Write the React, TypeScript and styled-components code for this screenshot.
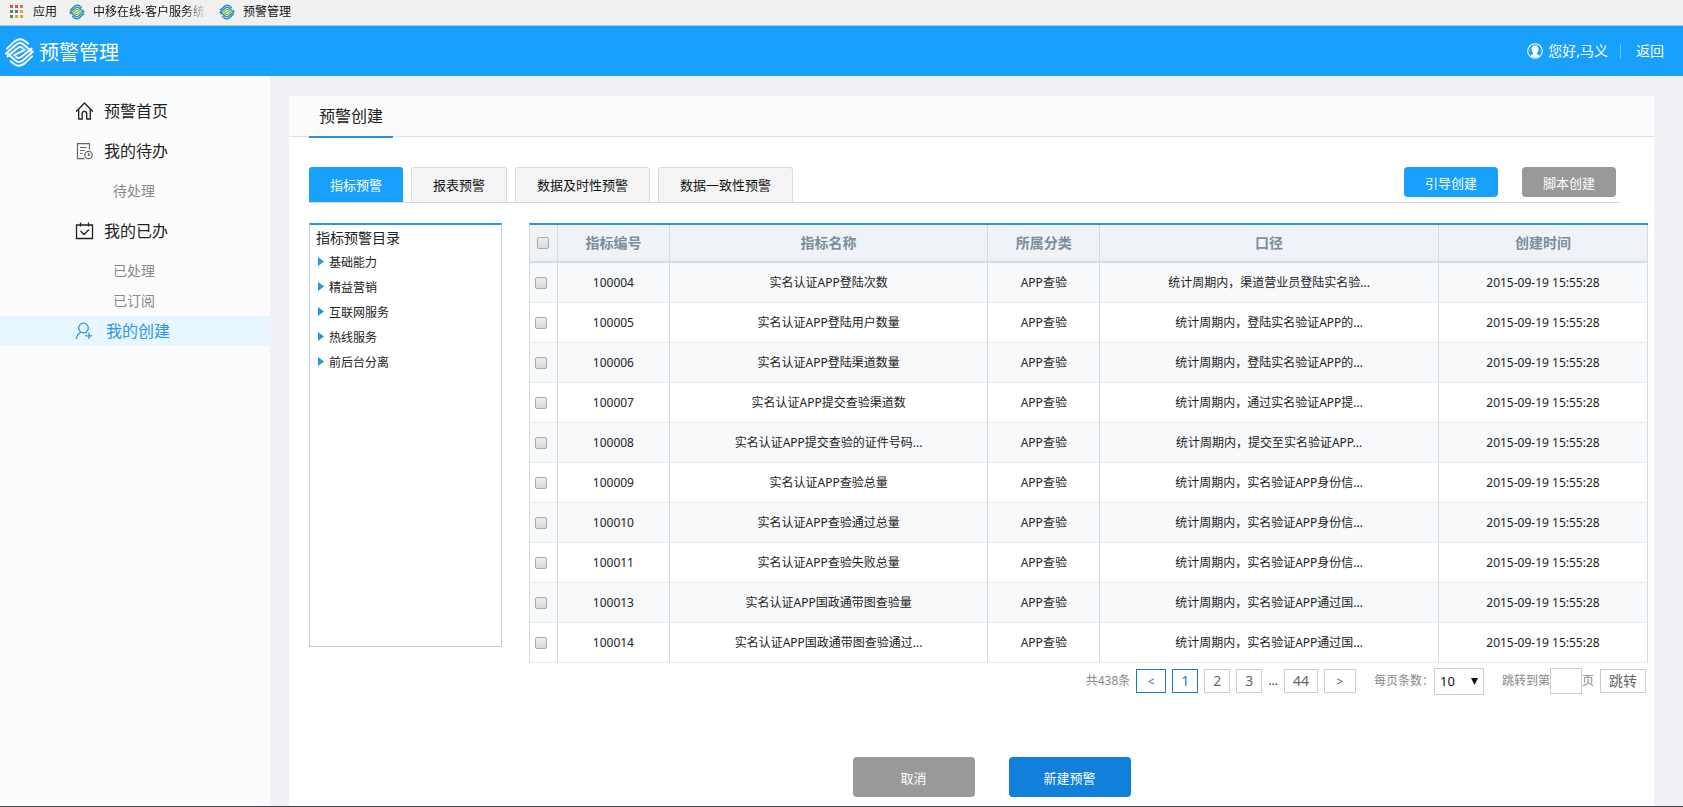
import React from "react";
import styled, { createGlobalStyle, css } from "styled-components";

const Global = createGlobalStyle`
  *, *::before, *::after { box-sizing: border-box; }
  body {
    margin: 0;
    background: #f0f0f5;
    color: #222;
    font: 12px/20px "Noto Sans", "Noto Sans CJK SC", sans-serif;
  }
  button, input, select { font-family: inherit; margin: 0; }
  a { color: inherit; text-decoration: none; }
  h1, h2, p, ul { margin: 0; padding: 0; font-weight: 400; }
  ul { list-style: none; }
`;

const Page = styled.div`
  min-height: 100vh;
  display: flex;
  flex-direction: column;
  border-bottom: 1px solid #3f4450;
`;

const BookmarkBar = styled.nav`
  height: 26px;
  padding: 0 9px 2px;
  display: flex;
  align-items: center;
  gap: 12px;
  background: #f1f1f1;
  border-bottom: 1px solid #b9c4cf;
`;

const Bookmark = styled.a<{ $faded?: boolean }>`
  display: flex;
  align-items: center;
  gap: 8px;
  color: #111;
  white-space: nowrap;
  ${(p) =>
    p.$faded &&
    css`
      span {
        width: 114px;
        overflow: hidden;
        mask-image: linear-gradient(90deg, #000 80%, transparent);
      }
    `}
`;

const TopBar = styled.header`
  height: 50px;
  padding: 0 19px 0 4px;
  display: flex;
  align-items: center;
  justify-content: space-between;
  background: #18a1fc;
  color: #fff;
`;

const Brand = styled.div`
  display: flex;
  align-items: center;
  gap: 4px;
  padding-top: 3px;
`;

const BrandName = styled.h1`
  font-size: 20px;
  line-height: 28px;
`;

const UserArea = styled.div`
  display: flex;
  align-items: center;
  font-size: 14px;
`;

const UserName = styled.span`
  margin-left: 5px;
`;

const Divider = styled.span`
  width: 1px;
  height: 15px;
  margin: 0 15px 0 12px;
  background: #6cc3fd;
`;

const Body = styled.div`
  flex: 1;
  display: flex;
`;

const Sidebar = styled.nav`
  flex: 0 0 270px;
  padding-top: 16px;
  background: #fcfcfc;
`;

const MenuLink = styled.a<{ $active?: boolean }>`
  height: ${(p) => (p.$active ? 30 : 40)}px;
  padding: ${(p) => (p.$active ? "0 0 0 75px" : "0 0 2px 75px")};
  display: flex;
  align-items: center;
  gap: ${(p) => (p.$active ? 12 : 10)}px;
  font-size: 16px;
  color: ${(p) => (p.$active ? "#2f95e8" : "#222")};
  background: ${(p) => (p.$active ? "#e8f6ff" : "transparent")};
`;

const SubMenu = styled.ul<{ $last?: boolean }>`
  padding: ${(p) => (p.$last ? "4px 0 0" : "4px 0 6px")};
`;

const SubLink = styled.a`
  display: block;
  padding-left: 113px;
  font-size: 14px;
  line-height: 30px;
  color: #888;
`;

const Main = styled.main`
  flex: 1;
  min-width: 0;
  padding: 20px 29px 0 19px;
  display: flex;
`;

const Panel = styled.section`
  flex: 1;
  min-width: 0;
  background: #fff;
`;

const PanelHead = styled.div`
  height: 41px;
  padding-left: 20px;
  display: flex;
  background: #fcfcfc;
  border-bottom: 1px solid #dcdfe4;
`;

const PanelTitle = styled.h2`
  height: 42px;
  padding: 0 10px;
  border-bottom: 2px solid #2296e0;
  font-size: 16px;
  line-height: 40px;
`;

const TabRow = styled.div`
  margin: 30px 34px 0 20px;
  display: flex;
  justify-content: space-between;
  border-bottom: 1px solid #d6d6d6;
`;

const Tabs = styled.div`
  display: flex;
  gap: 8px;
`;

const Tab = styled.button<{ $active?: boolean }>`
  height: 35px;
  padding: 0 ${(p) => (p.$active ? 20 : 21)}px;
  border: 1px solid ${(p) => (p.$active ? "#18a1fc" : "#d8dadd")};
  border-bottom: 0;
  border-radius: 3px 3px 0 0;
  background: ${(p) => (p.$active ? "#18a1fc" : "#f4f4f4")};
  color: ${(p) => (p.$active ? "#fff" : "#111")};
  font-size: 13px;
  line-height: 20px;
`;

const CreateButtons = styled.div`
  display: flex;
  gap: 24px;
  padding-right: 4px;
`;

const tones = { blue: "#18a1fc", gray: "#999", deep: "#1080da" };

const Button = styled.button<{ $tone: keyof typeof tones; $large?: boolean }>`
  width: ${(p) => (p.$large ? 122 : 94)}px;
  height: ${(p) => (p.$large ? 40 : 30)}px;
  padding: 0;
  border: 0;
  border-radius: 4px;
  background: ${(p) => tones[p.$tone]};
  color: #fff;
  font-size: 13px;
`;

const Content = styled.div`
  margin: 20px 6px 0 20px;
  display: flex;
  align-items: flex-start;
  gap: 27px;
`;

const Tree = styled.aside`
  flex: 0 0 193px;
  height: 424px;
  padding: 2px 6px;
  border: 1px solid #c3cbd2;
  border-top: 2px solid #2e96d8;
`;

const TreeTitle = styled.p`
  font-size: 14px;
  line-height: 22px;
`;

const TreeItem = styled.button`
  height: 25px;
  padding: 0 2px;
  display: flex;
  align-items: center;
  gap: 5px;
  border: 0;
  background: none;
  color: #222;
  font-size: 12px;
`;

const TableArea = styled.div`
  flex: 1;
  min-width: 0;
`;

const Table = styled.table`
  width: 100%;
  table-layout: fixed;
  border-collapse: separate;
  border-spacing: 0;
  border-top: 2px solid #2e96d8;
  border-left: 1px solid #d3dbe2;
  text-align: center;
`;

const Th = styled.th<{ $width?: string }>`
  width: ${(p) => p.$width};
  height: 38px;
  padding: 0;
  border-right: 1px solid #d3dbe2;
  border-bottom: 2px solid #d8dde2;
  background: #eff2f6;
  color: #7b8d9b;
  font-size: 14px;
  font-weight: 700;
`;

const Row = styled.tr`
  &:nth-child(odd) {
    background: #f7f9fb;
  }
`;

const Td = styled.td`
  height: 40px;
  padding: 0;
  border-right: 1px solid #d3dbe2;
  border-bottom: 1px solid #e9ecef;
  white-space: nowrap;
  overflow: hidden;
`;

const Check = styled.input`
  appearance: none;
  display: block;
  width: 12px;
  height: 12px;
  margin: 0 0 0 7px;
  border: 1px solid #aaa;
  border-radius: 2px;
  background: linear-gradient(#eee, #d9d9d9);
  &:checked {
    background: #18a1fc;
  }
  ${Td} & {
    margin-left: 5px;
  }
`;

const Pager = styled.div`
  height: 40px;
  padding: 0 2px 4px 0;
  display: flex;
  align-items: center;
  justify-content: flex-end;
  gap: 6px;
  color: #888;
  white-space: nowrap;
`;

const PageButton = styled.button<{ $active?: boolean; $width?: number }>`
  width: ${(p) => p.$width ?? 26}px;
  height: 24px;
  padding: 0;
  border: 1px solid ${(p) => (p.$active ? "#1a7fb8" : "#ccc")};
  background: #fff;
  color: ${(p) => (p.$active ? "#1a7fb8" : "#666")};
  font-size: 14px;
  line-height: 20px;
`;

const Arrow = styled.span`
  font-size: 12px;
`;

const Dots = styled.span`
  color: #333;
`;

const PagerLabel = styled.label`
  display: flex;
  align-items: center;
  margin-left: 12px;
`;

const SelectBox = styled.span`
  position: relative;
  display: flex;
  color: #111;
  svg {
    position: absolute;
    top: 10px;
    right: 6px;
    pointer-events: none;
  }
`;

const PageSize = styled.select`
  appearance: none;
  width: 50px;
  height: 27px;
  padding: 0 0 0 5px;
  border: 1px solid #ccc;
  border-radius: 0;
  background: #fff;
  color: #111;
  font-size: 13px;
`;

const PageInput = styled.input`
  width: 32px;
  height: 26px;
  border: 1px solid #ccc;
  text-align: center;
`;

const Actions = styled.div`
  padding: 54px 0 9px 40px;
  display: flex;
  justify-content: center;
  gap: 34px;
`;

function MobileLogo({ size, color }: { size: number; color?: boolean }) {
  const outer = color ? "#1d86c8" : "#fff";
  const inner = color ? "#7dbb3c" : "#fff";
  const half = (
    <>
      <path stroke={outer} d="M3 12 11 4.500Q17 0 22 4.500L25 7" />
      <path stroke={outer} d="M2 17 13 7.500Q17 4.500 20.500 8L28.500 15" />
      <path stroke={inner} d="M3.500 20 14 11.500Q17 9 19.500 11.500" />
    </>
  );
  return (
    <svg width={size} height={size} viewBox="0 0 32 32" fill="none" strokeWidth={color ? 2.6 : 2} strokeLinecap="round" strokeLinejoin="round" aria-hidden="true">
      {half}
      <g transform="rotate(180 16 16)">{half}</g>
      <path stroke={inner} d="M10.500 19 21.500 13" />
    </svg>
  );
}

function AppsIcon() {
  const colors = ["#d9534a", "#d9534a", "#d9743a", "#5b8a4c", "#4a78c8", "#d9a43a", "#5b8a4c", "#d9a43a", "#d9a43a"];
  return (
    <svg width="16" height="14" viewBox="0 0 16 14" aria-hidden="true">
      {colors.map((c, i) => (
        <rect key={i} x={(i % 3) * 5 + 1} y={Math.floor(i / 3) * 5} width="3" height="3" fill={c} />
      ))}
    </svg>
  );
}

function UserIcon() {
  return (
    <svg width="16" height="16" viewBox="0 0 16 16" aria-hidden="true">
      <circle cx="8" cy="8" r="7.3" fill="none" stroke="#fff" strokeWidth="1.1" />
      <path fill="#fff" d="M8 2.500c2.500 0 3.600 1.700 3.600 3.700 0 1.600-.8 2.900-1.700 3.500v1.100c0 .7 1.900 1 2.600 1.700A6.500 6.500 0 0 1 8 14.600a6.500 6.500 0 0 1-4.500-2.100c.7-.7 2.600-1 2.600-1.700V9.700C5.200 9.100 4.400 7.800 4.400 6.200 4.400 4.200 5.500 2.500 8 2.500z" />
    </svg>
  );
}

const iconProps = { width: 19, height: 20, viewBox: "0 0 19 20", fill: "none", stroke: "currentColor", "aria-hidden": true } as const;

function HomeIcon() {
  return (
    <svg {...iconProps} strokeWidth="1.3" strokeLinejoin="round" strokeLinecap="round">
      <path d="M1.500 10.300 9.500 2l8 8.300M3.700 8.500V18h3.500v-5.300a2.200 2.200 0 0 1 4.500 0V18h3.600V8.500" />
    </svg>
  );
}

function TodoIcon() {
  return (
    <svg {...iconProps} stroke="#666" strokeWidth="1.2">
      <path d="M14.500 8.500V2.600H2.500v15h7M5 6.500h6.500M5 9.500h4.500M5 12.500h2.500" />
      <circle cx="13.500" cy="14" r="3.700" />
      <path d="M13.500 12v2.200h2" />
    </svg>
  );
}

function DoneIcon() {
  return (
    <svg {...iconProps} strokeWidth="1.3">
      <path d="M1.500 4h16v13.500h-16zM5.500 1.500v4M13.500 1.500v4M5.500 10l3.500 3.500 5-5" />
    </svg>
  );
}

function CreateIcon() {
  return (
    <svg {...iconProps} strokeWidth="1.3">
      <circle cx="8.500" cy="7" r="4.800" />
      <path d="M1.500 18c.3-3.500 1.800-5.700 4.500-6.800M10.800 11.300l1.200 1M14 11.500v6.500M10.500 14.800h6.500" />
    </svg>
  );
}

const categories = ["基础能力", "精益营销", "互联网服务", "热线服务", "前后台分离"];

const rows = [
  ["100004", "实名认证APP登陆次数", "统计周期内，渠道营业员登陆实名验..."],
  ["100005", "实名认证APP登陆用户数量", "统计周期内，登陆实名验证APP的..."],
  ["100006", "实名认证APP登陆渠道数量", "统计周期内，登陆实名验证APP的..."],
  ["100007", "实名认证APP提交查验渠道数", "统计周期内，通过实名验证APP提..."],
  ["100008", "实名认证APP提交查验的证件号码...", "统计周期内，提交至实名验证APP..."],
  ["100009", "实名认证APP查验总量", "统计周期内，实名验证APP身份信..."],
  ["100010", "实名认证APP查验通过总量", "统计周期内，实名验证APP身份信..."],
  ["100011", "实名认证APP查验失败总量", "统计周期内，实名验证APP身份信..."],
  ["100013", "实名认证APP国政通带图查验量", "统计周期内，实名验证APP通过国..."],
  ["100014", "实名认证APP国政通带图查验通过...", "统计周期内，实名验证APP通过国..."],
];

export default function App() {
  return (
    <Page>
      <Global />
      <BookmarkBar aria-label="书签">
        <Bookmark href="#apps"><AppsIcon /><span>应用</span></Bookmark>
        <Bookmark href="#service" $faded><MobileLogo size={16} color /><span>中移在线-客户服务统</span></Bookmark>
        <Bookmark href="#warning"><MobileLogo size={16} color /><span>预警管理</span></Bookmark>
      </BookmarkBar>
      <TopBar>
        <Brand>
          <MobileLogo size={31} />
          <BrandName>预警管理</BrandName>
        </Brand>
        <UserArea>
          <UserIcon />
          <UserName>您好,马义</UserName>
          <Divider />
          <a href="#back">返回</a>
        </UserArea>
      </TopBar>
      <Body>
        <Sidebar>
          <MenuLink href="#home"><HomeIcon />预警首页</MenuLink>
          <MenuLink href="#todo"><TodoIcon />我的待办</MenuLink>
          <SubMenu>
            <li><SubLink href="#pending">待处理</SubLink></li>
          </SubMenu>
          <MenuLink href="#done"><DoneIcon />我的已办</MenuLink>
          <SubMenu $last>
            <li><SubLink href="#processed">已处理</SubLink></li>
            <li><SubLink href="#subscribed">已订阅</SubLink></li>
          </SubMenu>
          <MenuLink href="#create" $active><CreateIcon />我的创建</MenuLink>
        </Sidebar>
        <Main>
          <Panel>
            <PanelHead>
              <PanelTitle>预警创建</PanelTitle>
            </PanelHead>
            <TabRow>
              <Tabs>
                <Tab $active>指标预警</Tab>
                <Tab>报表预警</Tab>
                <Tab>数据及时性预警</Tab>
                <Tab>数据一致性预警</Tab>
              </Tabs>
              <CreateButtons>
                <Button $tone="blue">引导创建</Button>
                <Button $tone="gray">脚本创建</Button>
              </CreateButtons>
            </TabRow>
            <Content>
              <Tree>
                <TreeTitle>指标预警目录</TreeTitle>
                <ul>
                  {categories.map((name) => (
                    <li key={name}>
                      <TreeItem>
                        <svg width="6" height="9" viewBox="0 0 6 9" aria-hidden="true"><path fill="#2398e4" d="M0 0l6 4.500L0 9z" /></svg>
                        {name}
                      </TreeItem>
                    </li>
                  ))}
                </ul>
              </Tree>
              <TableArea>
                <Table>
                  <thead>
                    <tr>
                      <Th $width="28px"><Check type="checkbox" aria-label="全选" /></Th>
                      <Th $width="10%">指标编号</Th>
                      <Th>指标名称</Th>
                      <Th $width="10%">所属分类</Th>
                      <Th $width="30.3%">口径</Th>
                      <Th $width="18.7%">创建时间</Th>
                    </tr>
                  </thead>
                  <tbody>
                    {rows.map(([id, name, scope]) => (
                      <Row key={id}>
                        <Td><Check type="checkbox" aria-label={id} /></Td>
                        <Td>{id}</Td>
                        <Td>{name}</Td>
                        <Td>APP查验</Td>
                        <Td>{scope}</Td>
                        <Td>2015-09-19 15:55:28</Td>
                      </Row>
                    ))}
                  </tbody>
                </Table>
                <Pager>
                  <span>共438条</span>
                  <PageButton $active $width={30} aria-label="上一页"><Arrow>&lt;</Arrow></PageButton>
                  <PageButton $active>1</PageButton>
                  <PageButton>2</PageButton>
                  <PageButton>3</PageButton>
                  <Dots>...</Dots>
                  <PageButton $width={34}>44</PageButton>
                  <PageButton $width={32} aria-label="下一页"><Arrow>&gt;</Arrow></PageButton>
                  <PagerLabel>
                    每页条数：
                    <SelectBox>
                      <PageSize defaultValue="10">
                        <option>10</option>
                        <option>20</option>
                        <option>50</option>
                      </PageSize>
                      <svg width="7" height="7" viewBox="0 0 7 7" aria-hidden="true"><path fill="#111" d="M0 0h7L3.500 7z" /></svg>
                    </SelectBox>
                  </PagerLabel>
                  <PagerLabel>
                    跳转到第
                    <PageInput type="text" />
                    页
                  </PagerLabel>
                  <PageButton $width={46}>跳转</PageButton>
                </Pager>
              </TableArea>
            </Content>
            <Actions>
              <Button $tone="gray" $large>取消</Button>
              <Button $tone="deep" $large>新建预警</Button>
            </Actions>
          </Panel>
        </Main>
      </Body>
    </Page>
  );
}
